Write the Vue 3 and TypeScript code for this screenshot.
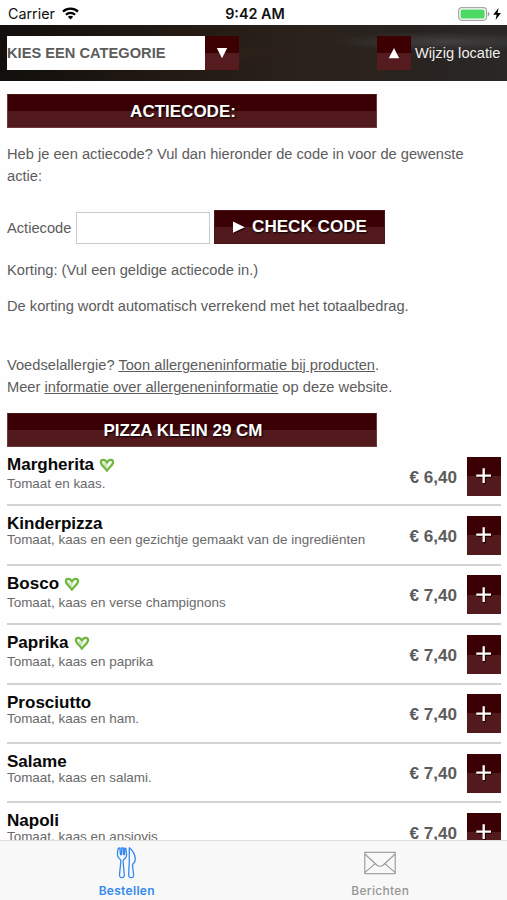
<script setup lang="ts">
interface Dish {
  name: string
  description: string
  price: string
  vegetarian: boolean
}

const dishes: Dish[] = [
  { name: 'Margherita', description: 'Tomaat en kaas.', price: '€ 6,40', vegetarian: true },
  { name: 'Kinderpizza', description: 'Tomaat, kaas en een gezichtje gemaakt van de ingrediënten', price: '€ 6,40', vegetarian: false },
  { name: 'Bosco', description: 'Tomaat, kaas en verse champignons', price: '€ 7,40', vegetarian: true },
  { name: 'Paprika', description: 'Tomaat, kaas en paprika', price: '€ 7,40', vegetarian: true },
  { name: 'Prosciutto', description: 'Tomaat, kaas en ham.', price: '€ 7,40', vegetarian: false },
  { name: 'Salame', description: 'Tomaat, kaas en salami.', price: '€ 7,40', vegetarian: false },
  { name: 'Napoli', description: 'Tomaat, kaas en ansjovis', price: '€ 7,40', vegetarian: false },
]
</script>

<template>
  <div class="screen">
    <header class="status">
      <div class="carrier">
        <span>Carrier</span>
        <svg width="17" height="13" viewBox="0 0 17 13">
          <g fill="none" stroke="#000" stroke-width="2.2">
            <path d="M1 4.6C5.2.6 11.8.6 16 4.6" />
            <path d="M3.9 7.7C6.5 5.3 10.5 5.3 13.1 7.7" />
          </g>
          <path d="M5.8 9.7C7.3 8.4 9.7 8.4 11.2 9.7L8.5 12.5Z" />
        </svg>
      </div>
      <time class="clock">9:42 AM</time>
      <div class="power">
        <svg width="44" height="14" viewBox="0 0 44 14">
          <rect x=".7" y=".7" width="27.8" height="12.6" rx="3.2" fill="#fff" stroke="#a5a8a5" stroke-width="1.2" />
          <rect x="2.6" y="2.5" width="24" height="9" rx="1.6" fill="#4cd964" />
          <path d="M29.8 4.8Q31.6 5.5 31.6 7T29.8 9.2Z" fill="#999" />
          <path d="M40.6 1L35.2 7.8H38.6L37.6 13L43 6H39.6Z" fill="#000" />
        </svg>
      </div>
    </header>

    <nav class="toolbar">
      <div class="category">
        <span class="category-label">KIES EEN CATEGORIE</span>
        <button class="square" type="button">
          <svg width="12" height="12" viewBox="0 0 12 12"><path d="M.8 1H11.2L6 11.2Z" fill="#fff" /></svg>
        </button>
      </div>
      <div class="location">
        <button class="square" type="button">
          <svg width="12" height="12" viewBox="0 0 12 12"><path d="M.8 11.2H11.2L6 1Z" fill="#fff" /></svg>
        </button>
        <span>Wijzig locatie</span>
      </div>
    </nav>

    <main class="content">
      <h2 class="heading action-heading">ACTIECODE:</h2>
      <p class="intro">Heb je een actiecode? Vul dan hieronder de code in voor de gewenste actie:</p>
      <form class="code-form">
        <label for="code">Actiecode</label>
        <input id="code" type="text" />
        <button class="check" type="button">
          <svg width="14" height="15" viewBox="0 0 14 15">
            <path d="M2 3L13.6 8.4L2 13.8Z" fill="#200" />
            <path d="M1 1.6L12.8 7.2L1 12.8Z" fill="#fff" />
          </svg>
          <span>CHECK CODE</span>
        </button>
      </form>
      <p class="discount">Korting: (Vul een geldige actiecode in.)</p>
      <p class="settle">De korting wordt automatisch verrekend met het totaalbedrag.</p>
      <p class="allergy">
        <span>Voedselallergie? <a>Toon allergeneninformatie bij producten</a>.</span><br />
        <span>Meer <a>informatie over allergeneninformatie</a> op deze website.</span>
      </p>

      <h2 class="heading pizza-heading">PIZZA KLEIN 29 CM</h2>
      <ul class="dishes">
        <li v-for="dish in dishes" :key="dish.name" class="dish">
          <div class="info">
            <div class="title" :class="{ tall: dish.vegetarian }">
              <span>{{ dish.name }}</span>
              <svg v-if="dish.vegetarian" class="heart" width="16" height="15" viewBox="0 0 16 15">
                <path d="M7.9 12.8C5.9 9.3 1.8 7 1.9 4.2C2 1.2 6.3 1 7.9 4.7C9.6 1 13.8 1.1 14.1 4C14.3 7 9.9 9.3 7.9 12.8Z" fill="#f4faef" stroke="#6fb63f" stroke-width="2.2" stroke-linejoin="round" />
                <path d="M7.9 4.5V7.8M5 5.2L7.5 9.7" fill="none" stroke="#9bcd79" stroke-width=".8" />
              </svg>
            </div>
            <div class="description">{{ dish.description }}</div>
          </div>
          <span class="price">{{ dish.price }}</span>
          <button class="add" type="button">
            <svg width="18" height="18" viewBox="0 0 18 18" fill="none">
              <path d="M9.7 2.7V17.2M2.5 9.9H17" stroke="#200" stroke-width="2.4" />
              <path d="M8.7 1.2V16M1.3 8.6H16" stroke="#fff" stroke-width="2.3" />
            </svg>
          </button>
        </li>
      </ul>
    </main>

    <footer class="tabs">
      <div class="tab active">
        <svg width="22" height="34" viewBox="0 0 22 34" fill="none" stroke="#3489ef" stroke-width="1.3" stroke-linejoin="round">
          <path d="M2.2 2.3Q.8 9 2 10.8Q3 12.6 4.5 13.7Q5 14.4 4.8 16L3.5 28.5Q3.4 31.7 5.8 31.7Q8.5 31.7 8.3 28.5L7.1 16Q7 14.4 7.6 13.6Q9.8 12.2 10.3 10.5Q11 8.7 9.8 2.3L8.7 2.1L8.5 8.5H7.5L7.2 2H5.6L5.5 8.5H4.4L3.9 2Z" />
          <path d="M13.3 1.8V15L12.7 28.5Q12.6 31.7 15.2 31.7Q17.8 31.7 17.6 28.5L16.5 19.5Q16.4 18.2 17.5 17.4Q19.4 15.8 19.3 13.2Q19 6.5 13.3 1.8Z" />
        </svg>
        <span>Bestellen</span>
      </div>
      <div class="tab">
        <svg width="32" height="34" viewBox="0 0 32 34" fill="none" stroke="#989898" stroke-width="1.1">
          <rect x=".8" y="6.3" width="30.4" height="21.4" />
          <path d="M.8 8L13 19.2Q16 21.3 19 19.2L31.2 8M.8 26.7L11.2 17.6M31.2 26.7L20.8 17.6" />
        </svg>
        <span>Berichten</span>
      </div>
    </footer>
  </div>
</template>

<style>
body {
  margin: 0;
  background: #fff;
}
</style>

<style scoped>
.screen {
  display: flex;
  flex-direction: column;
  width: 507px;
  height: 900px;
  overflow: hidden;
  background: #fefefe;
  color: #5c5c5c;
  font-family: "Liberation Sans", Arial, sans-serif;
  font-size: 14.67px;
  line-height: 22px;
}

button {
  display: flex;
  align-items: center;
  justify-content: center;
  margin: 0;
  padding: 0;
  border: 0;
  font-family: inherit;
}

p,
h2,
ul {
  margin: 0;
  padding: 0;
}

.status {
  display: grid;
  grid-template-columns: 1fr auto 1fr;
  align-items: center;
  flex: none;
  box-sizing: border-box;
  height: 25px;
  padding: 2px 5px 0 8px;
  color: #111;
  font-family: Inter, sans-serif;
  font-size: 14.3px;
}

.carrier {
  display: flex;
  align-items: center;
  gap: 7px;
}

.clock {
  font-size: 14.4px;
  font-weight: 600;
}

.power {
  display: flex;
  justify-content: flex-end;
}

.toolbar {
  display: flex;
  justify-content: space-between;
  flex: none;
  box-sizing: border-box;
  height: 56px;
  padding: 11px 6.5px 0 7px;
  background:
    radial-gradient(ellipse at 38% 50%, #30221a 0, transparent 24%),
    radial-gradient(ellipse at 88% 30%, #414040 0, transparent 18%),
    linear-gradient(90deg, #120f0c, #231a14 35%, #2b221b 62%, #292421 85%, #292827);
}

.category,
.location {
  display: flex;
  height: 34px;
}

.category-label {
  width: 198px;
  background: #fff;
  font-size: 14.67px;
  font-weight: 700;
  line-height: 34px;
  white-space: nowrap;
}

.square {
  width: 34px;
  height: 34px;
  background: linear-gradient(#3c0003 50%, #551b1e 50%);
}

.location {
  gap: 4px;
  color: #eee;
  line-height: 34px;
}

.content {
  flex: 1;
  min-height: 0;
  padding: 13px 6px 0 7px;
  overflow: hidden;
}

.heading {
  box-sizing: border-box;
  width: 370px;
  height: 34px;
  border: 1px solid #6b3a3c;
  border-top-color: #4a1719;
  background: linear-gradient(#3a0003 50%, #531a1d 50%);
  color: #fff;
  font-size: 17px;
  line-height: 33px;
  text-align: center;
  text-shadow: 1px 1px 2px #000;
}

.action-heading,
.pizza-heading {
  padding-right: 18px;
}

.intro {
  margin-top: 15px;
}

.code-form {
  display: flex;
  align-items: flex-start;
  margin-top: 23px;
}

.code-form label {
  width: 69px;
  padding-top: 7px;
}

.code-form input {
  box-sizing: border-box;
  width: 134px;
  height: 32px;
  margin: 2px 4px 0 0;
  padding: 0 4px;
  border: 1px solid #c8cacc;
  background: #fff;
}

.check {
  gap: 6px;
  box-sizing: border-box;
  width: 171px;
  height: 34px;
  border: 1px solid #4a1719;
  background: linear-gradient(#3a0003 50%, #531a1d 50%);
  color: #fff;
  font-size: 17.1px;
  font-weight: 700;
  text-shadow: 1px 1px 2px #000;
}

.discount {
  margin-top: 15px;
}

.settle {
  margin-top: 14px;
}

.allergy {
  margin-top: 37px;
  white-space: nowrap;
}

.allergy a {
  text-decoration: underline;
}

.pizza-heading {
  margin-top: 15px;
}

.dishes {
  list-style: none;
}

.dish {
  display: flex;
  box-sizing: border-box;
  height: 59.4px;
  border-bottom: 2px solid #d2d2d2;
}

.info {
  flex: 1;
  padding-top: 8px;
}

.title {
  display: flex;
  gap: 5px;
  height: 17px;
  color: #080808;
  font-size: 17.05px;
  font-weight: 700;
  line-height: 19px;
}

.title.tall {
  height: 20px;
}

.heart {
  margin-top: 3px;
}

.description {
  color: #6a6a6a;
  font-size: 13.43px;
  line-height: 18px;
  white-space: nowrap;
}

.price {
  padding-top: 19.5px;
  font-size: 17.1px;
  font-weight: 700;
}

.add {
  width: 34px;
  height: 39px;
  margin: 9.6px 0 0 10px;
  background: linear-gradient(#3a0003 50%, #531a1d 50%);
}

.tabs {
  display: grid;
  grid-template-columns: 1fr 1fr;
  flex: none;
  box-sizing: border-box;
  height: 60px;
  border-top: 1px solid #dedede;
  background: #f8f8f8;
}

.tab {
  display: flex;
  flex-direction: column;
  align-items: center;
  padding-top: 5px;
  color: #969696;
  font-family: Inter, sans-serif;
  font-size: 12px;
  font-weight: 500;
  letter-spacing: 0.3px;
  line-height: 22px;
}

.tab.active {
  color: #3489ef;
  font-weight: 600;
}
</style>
